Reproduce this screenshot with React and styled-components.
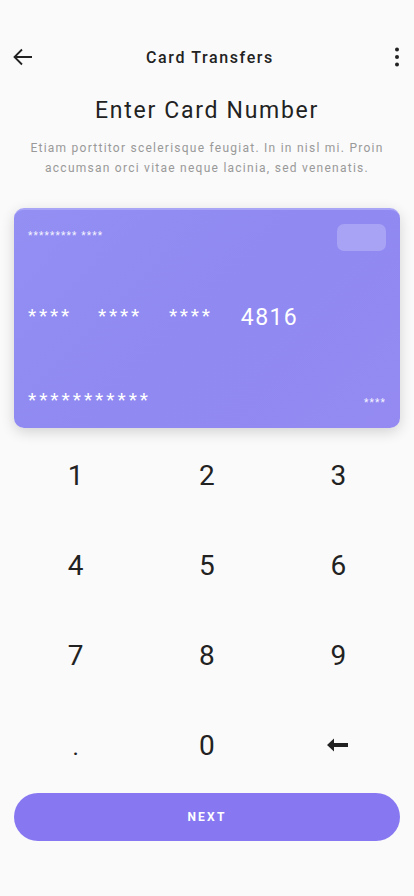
import styled, { createGlobalStyle } from "styled-components";

const GlobalStyle = createGlobalStyle`
    body {
        margin: 0;
        background: #fafafa;
        font-family: Roboto, "Noto Sans", sans-serif;
        color: #222;
    }
`;

const keys = ["1", "2", "3", "4", "5", "6", "7", "8", "9", ".", "0", "back"];

const App = () => {
    return (
        <Page>
            <GlobalStyle />
            <Header>
                <IconButton aria-label="back">
                    <svg width="24" height="24" viewBox="0 0 24 24">
                        <path
                            d="M21 12H4M11 4.5L3.5 12L11 19.5"
                            fill="none"
                            stroke="#222"
                            strokeWidth="1.8"
                        />
                    </svg>
                </IconButton>
                <Title>Card Transfers</Title>
                <IconButton aria-label="more">
                    <svg width="24" height="24" viewBox="0 0 24 24">
                        <circle cx="12" cy="4.5" r="2" fill="#222" />
                        <circle cx="12" cy="12" r="2" fill="#222" />
                        <circle cx="12" cy="19.5" r="2" fill="#222" />
                    </svg>
                </IconButton>
            </Header>

            <Heading>Enter Card Number</Heading>
            <Lead>
                Etiam porttitor scelerisque feugiat. In in nisl mi. Proin
                accumsan orci vitae neque lacinia, sed venenatis.
            </Lead>

            <Card>
                <CardTop>
                    <TinyStars>********* ****</TinyStars>
                    <Chip />
                </CardTop>
                <CardNumber>
                    <Group>****</Group>
                    <Group $gap={29}>****</Group>
                    <Group $gap={30}>****</Group>
                    <Digits>4816</Digits>
                </CardNumber>
                <CardBottom>
                    <Holder>***********</Holder>
                    <TinyStars>****</TinyStars>
                </CardBottom>
            </Card>

            <Keypad>
                {keys.map(k => (
                    <Key key={k} $small={k === "."}>
                        {k === "back" ? (
                            <svg width="22" height="14" viewBox="0 0 22 14">
                                <path d="M0 7L7 0.5V5H21V9H7V13.5Z" fill="#222" />
                            </svg>
                        ) : (
                            k
                        )}
                    </Key>
                ))}
            </Keypad>

            <Footer>
                <NextButton>NEXT</NextButton>
            </Footer>
        </Page>
    );
};

export default App;

const Page = styled.div`
    width: 414px;
    min-height: 896px;
    background: #fafafa;
    display: flex;
    flex-direction: column;
`;

const Header = styled.div`
    display: flex;
    align-items: center;
    justify-content: space-between;
    height: 56px;
    margin-top: 29px;
    padding: 0 4px 0 10px;
`;

const IconButton = styled.button`
    display: flex;
    align-items: center;
    justify-content: center;
    width: 26px;
    height: 26px;
    padding: 0;
    border: none;
    background: transparent;
`;

const Title = styled.div`
    font-size: 16px;
    font-weight: 500;
    letter-spacing: 1.6px;
    color: #222;
`;

const Heading = styled.h1`
    margin: 12px 0 0;
    text-align: center;
    font-size: 23px;
    font-weight: 400;
    letter-spacing: 1.7px;
    color: #222;
`;

const Lead = styled.p`
    margin: 14px 20px 0;
    text-align: center;
    font-size: 12px;
    line-height: 20px;
    letter-spacing: 1.25px;
    color: #999;
`;

const Card = styled.div`
    margin: 30px 14px 0;
    height: 220px;
    box-sizing: border-box;
    padding: 14px 14px 17px;
    border-radius: 10px;
    border-top: 2px solid #a8a4f6;
    background: linear-gradient(135deg, #938ff3 0%, #8f89f1 50%, #948af2 100%);
    box-shadow: 0 4px 14px rgba(0, 0, 0, 0.16);
    display: flex;
    flex-direction: column;
    justify-content: space-between;
    color: #fff;
`;

const CardTop = styled.div`
    display: flex;
    justify-content: space-between;
    align-items: flex-start;
`;

const TinyStars = styled.span`
    font-size: 10px;
    letter-spacing: 1.2px;
    margin-top: 6px;
    color: #f4f3ff;
`;

const Chip = styled.div`
    width: 49px;
    height: 27px;
    border-radius: 7px;
    background: rgba(255, 255, 255, 0.22);
`;

const CardNumber = styled.div`
    display: flex;
    align-items: center;
    margin-bottom: 5px;
`;

const Group = styled.span`
    font-size: 19px;
    letter-spacing: 2.8px;
    margin-left: ${p => (p.$gap ? `${p.$gap - 3}px` : "0")};
    margin-top: -4px;
`;

const Digits = styled.span`
    font-size: 23px;
    letter-spacing: 1.4px;
    margin-left: 28px;
`;

const CardBottom = styled.div`
    display: flex;
    justify-content: space-between;
    align-items: center;
`;

const Holder = styled.span`
    font-size: 19px;
    letter-spacing: 3px;
`;

const Keypad = styled.div`
    display: grid;
    grid-template-columns: repeat(3, 1fr);
    grid-auto-rows: 90px;
    padding: 2px 10px 0;
`;

const Key = styled.div`
    display: flex;
    align-items: center;
    justify-content: center;
    font-size: ${p => (p.$small ? "24px" : "28px")};
    padding-top: ${p => (p.$small ? "4px" : "0")};
    color: #222;
`;

const Footer = styled.div`
    padding: 3px 14px 0;
`;

const NextButton = styled.button`
    width: 100%;
    height: 48px;
    border: none;
    border-radius: 24px;
    background: #8778f2;
    color: #fff;
    font-family: Roboto, sans-serif;
    font-size: 12px;
    font-weight: 700;
    letter-spacing: 2.2px;
`;
